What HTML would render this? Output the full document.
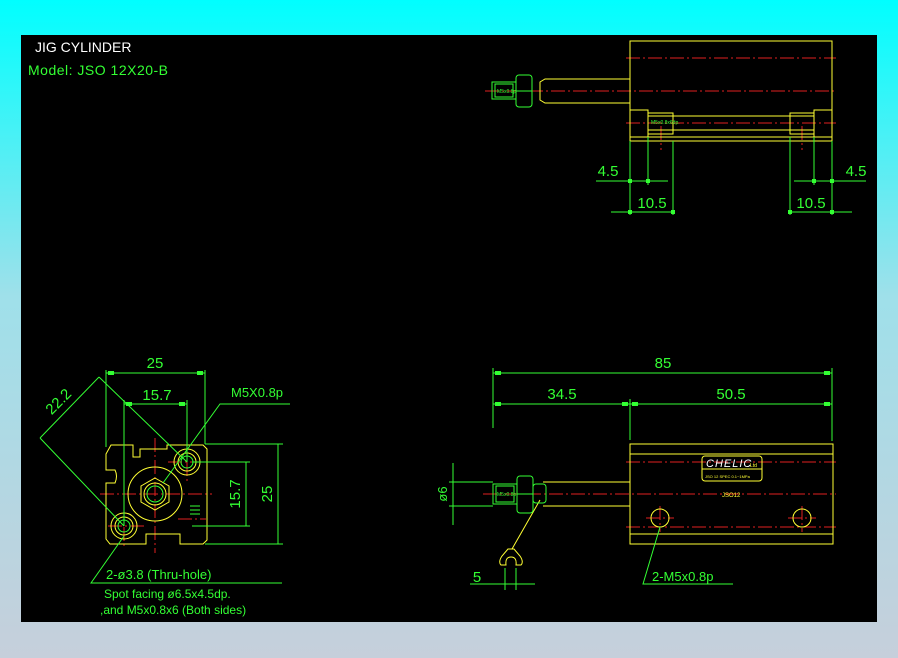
<!DOCTYPE html>
<html><head><meta charset="utf-8"><style>
html,body{margin:0;padding:0;width:898px;height:658px;overflow:hidden;background:linear-gradient(#00ffff,#9fe0ea 45%,#c6cfdb);}
svg{display:block}
text{font-family:"Liberation Sans",sans-serif;}
</style></head><body>
<svg width="898" height="658" viewBox="0 0 898 658" xmlns="http://www.w3.org/2000/svg">
<rect x="21" y="35" width="856" height="587" fill="#000"/>
<text x="35" y="52" fill="#fff" font-size="14">JIG CYLINDER</text>
<text x="28" y="75" fill="#33ff33" font-size="14" letter-spacing="0.5">Model:  JSO 12X20-B</text>

<g stroke="#e02020" stroke-width="1" stroke-dasharray="14,3,2,3" fill="none">
<line x1="626" y1="58" x2="836" y2="58"/>
<line x1="485" y1="91" x2="836" y2="91"/>
<line x1="626" y1="123" x2="836" y2="123"/>
<line x1="661" y1="126" x2="661" y2="150"/>
<line x1="802" y1="126" x2="802" y2="150"/>
<line x1="626" y1="462" x2="836" y2="462"/>
<line x1="483" y1="494" x2="836" y2="494"/>
<line x1="626" y1="527" x2="836" y2="527"/>
<line x1="100" y1="494" x2="212" y2="494"/>
<line x1="155" y1="438" x2="155" y2="553"/>
<line x1="168" y1="462" x2="206" y2="462"/>
<line x1="187" y1="440" x2="187" y2="484"/>
<line x1="108" y1="526" x2="145" y2="526"/>
<line x1="124" y1="505" x2="124" y2="548"/>
<line x1="178" y1="519" x2="206" y2="519"/>
<line x1="646" y1="518" x2="674" y2="518"/>
<line x1="660" y1="506" x2="660" y2="532"/>
<line x1="788" y1="518" x2="816" y2="518"/>
<line x1="802" y1="506" x2="802" y2="532"/>
</g>

<g stroke="#ffff33" stroke-width="1" fill="none">
<rect x="630" y="41" width="202" height="100"/>
<line x1="630" y1="137" x2="832" y2="137"/>
<path d="M630 79 H545 L540 82 V100 L545 103 H630"/>
<rect x="630" y="110" width="18" height="27"/>
<rect x="648" y="113" width="25" height="21"/>
<line x1="673" y1="116" x2="790" y2="116"/>
<line x1="673" y1="130" x2="790" y2="130"/>
<rect x="790" y="113" width="24" height="21"/>
<rect x="814" y="110" width="18" height="27"/>
<line x1="648" y1="116" x2="673" y2="116"/><line x1="648" y1="130" x2="673" y2="130"/>
<line x1="790" y1="116" x2="814" y2="116"/><line x1="790" y1="130" x2="814" y2="130"/>

<rect x="630" y="444" width="203" height="100"/>
<line x1="630" y1="454" x2="833" y2="454"/>
<line x1="630" y1="534" x2="833" y2="534"/>
<rect x="702" y="456" width="60" height="25" rx="3"/>
<line x1="702" y1="469" x2="762" y2="469"/>
<path d="M543 482 H630 M543 506 H630"/>
<circle cx="660" cy="518" r="9"/><circle cx="802" cy="518" r="9"/>
<path d="M508 549 L502 556 Q498 562 501 565 L506 565 Q505 557 511 557 Q517 557 516 565 L521 565 Q524 562 520 556 L514 549 Z"/>
<line x1="540" y1="500" x2="512" y2="549"/>

<path d="M106 454 L111 445 H133 V457 H140 V449 H167 V445 H203 L207 449 V540 L203 544 H180 V534 H146 V544 H110 L106 539 V483 H115 Q118 476 115 470 H106 Z"/>
<circle cx="155" cy="494" r="27"/>
<path d="M155 478 L169 486 V502 L155 510 L141 502 V486 Z"/>
<circle cx="155" cy="494" r="11"/>
<circle cx="187" cy="462" r="13"/><circle cx="187" cy="462" r="9"/>
<circle cx="124" cy="526" r="13"/><circle cx="124" cy="526" r="9"/>
</g>
<text x="706" y="467" fill="#fff" font-size="11" font-style="italic" letter-spacing="1">CHELIC</text>
<text x="750" y="467" fill="#ffff33" font-size="5">Ltd</text>
<text x="705" y="478" fill="#ffff33" font-size="4">JSO 12 SPEC 0.1~1MPa</text>
<text x="722" y="497" fill="#ffff33" font-size="6">JSO12</text>

<g stroke="#33ff33" stroke-width="1" fill="none">
<rect x="516" y="75" width="16" height="32" rx="3"/><line x1="516" y1="91" x2="532" y2="91"/>
<rect x="492" y="82" width="24" height="17"/><rect x="495" y="84" width="18" height="13"/>
<rect x="517" y="476" width="16" height="37" rx="3"/><line x1="517" y1="494" x2="533" y2="494"/>
<rect x="493" y="484" width="24" height="20"/><rect x="496" y="486" width="18" height="16"/>
<rect x="533" y="484" width="13" height="19" rx="3"/>
<circle cx="155" cy="494" r="8"/>
<circle cx="187" cy="462" r="6"/><circle cx="124" cy="526" r="6"/>

<path d="M630 141 V215 M648 137 V185 M673 141 V215 M790 137 V215 M814 137 V185 M832 141 V215"/>
<path d="M596 181 H668 M611 212 H673 M794 181 H866 M790 212 H852"/>
<path d="M493 368 V428 M832 368 V441 M630 399 V440 M493 373 H832 M493 404 H832"/>
<path d="M453 463 V525 M449 482 H493 M449 506 H493"/>
<path d="M470 584 H535 M505 568 V590 M516 568 V590"/>
<path d="M660 527 L643 584 H733"/>
<path d="M106 370 V447 M205 370 V444 M106 373 H205 M124 400 V526 M187 400 V462 M124 404 H187"/>
<path d="M40 438 L99 377 M99 377 L187 462 M40 438 L124 526"/>
<path d="M205 444 H283 M205 544 H283 M278 444 V544 M192 462 H250 M192 526 H250 M246 462 V526"/>
<path d="M163 483 L220 404 H290"/>
<path d="M124 536 L91 583 H282"/>
<path d="M190 506 H200 M190 510 H200 M190 514 H200"/>
</g>
<g fill="#33ff33">
<rect x="628" y="179" width="4" height="4"/><rect x="646" y="179" width="4" height="4"/>
<rect x="812" y="179" width="4" height="4"/><rect x="830" y="179" width="4" height="4"/>
<rect x="628" y="210" width="4" height="4"/><rect x="671" y="210" width="4" height="4"/>
<rect x="788" y="210" width="4" height="4"/><rect x="830" y="210" width="4" height="4"/>
<rect x="495" y="371" width="6" height="4"/><rect x="824" y="371" width="6" height="4"/>
<rect x="495" y="402" width="6" height="4"/><rect x="622" y="402" width="6" height="4"/><rect x="632" y="402" width="6" height="4"/><rect x="824" y="402" width="6" height="4"/>
<rect x="108" y="371" width="6" height="4"/><rect x="197" y="371" width="6" height="4"/>
<rect x="126" y="402" width="6" height="4"/><rect x="179" y="402" width="6" height="4"/>
</g>

<g fill="#33ff33" font-size="15">
<text x="663" y="368" text-anchor="middle">85</text>
<text x="562" y="399" text-anchor="middle">34.5</text>
<text x="731" y="399" text-anchor="middle">50.5</text>
<text x="608" y="176" text-anchor="middle">4.5</text>
<text x="856" y="176" text-anchor="middle">4.5</text>
<text x="652" y="208" text-anchor="middle">10.5</text>
<text x="811" y="208" text-anchor="middle">10.5</text>
<text x="477" y="582" text-anchor="middle">5</text>
<text x="155" y="368" text-anchor="middle">25</text>
<text x="157" y="400" text-anchor="middle">15.7</text>
<text transform="translate(62,405) rotate(-45)" text-anchor="middle">22.2</text>
<text transform="translate(272,494) rotate(-90)" text-anchor="middle">25</text>
<text transform="translate(240,494) rotate(-90)" text-anchor="middle">15.7</text>
<text transform="translate(447,494) rotate(-90)" text-anchor="middle" font-size="13">ø6</text>
</g>
<g fill="#33ff33" font-size="13">
<text x="652" y="581">2-M5x0.8p</text>
<text x="231" y="397">M5X0.8p</text>
<text x="106" y="579">2-ø3.8 (Thru-hole)</text>
<text x="104" y="598" font-size="12">Spot facing ø6.5x4.5dp.</text>
<text x="100" y="614" font-size="12">,and M5x0.8x6 (Both sides)</text>
<text x="651" y="124" font-size="5">M5x0.8x6dp.</text>
<text x="497" y="93" font-size="5">M5x0.8p</text>
<text x="497" y="496" font-size="5">M5x0.8p</text>
</g>
</svg>
</body></html>
